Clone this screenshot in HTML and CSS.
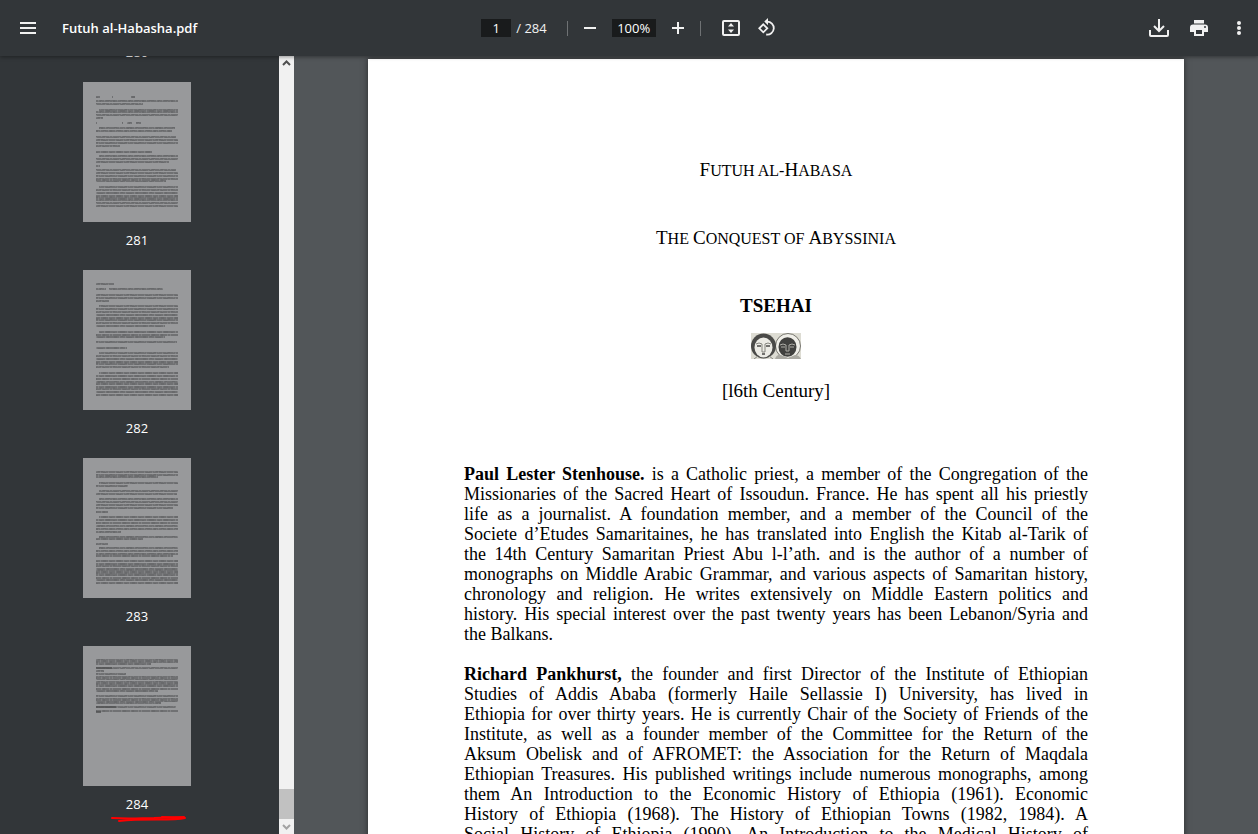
FILE: index.html
```html
<!DOCTYPE html>
<html lang="en">
<head>
    <meta charset="UTF-8">
    <meta name="viewport" content="width=device-width, initial-scale=1.0">
    <title>Futuh al-Habasha.pdf</title>
    <link rel="stylesheet" href="styles.css">
</head>
<body>
    <header class="toolbar">
        <div class="toolbar-start">
            <button class="icon-button" aria-label="Menu">
                <svg width="20" height="20" viewBox="0 0 20 20"><path d="M2 5h16M2 10h16M2 15h16" stroke="#f1f1f1" stroke-width="2"/></svg>
            </button>
            <h1 class="file-name">Futuh al-Habasha.pdf</h1>
        </div>

        <div class="toolbar-center">
            <div class="page-selector">
                <input class="field page-field" type="text" value="1" aria-label="Page number">
                <span>/ 284</span>
            </div>
            <span class="divider"></span>
            <div class="zoom-controls">
                <button class="icon-button" aria-label="Zoom out">
                    <svg width="20" height="20" viewBox="0 0 20 20"><path d="M4 10h12" stroke="#f1f1f1" stroke-width="2"/></svg>
                </button>
                <input class="field zoom-field" type="text" value="100%" aria-label="Zoom level">
                <button class="icon-button" aria-label="Zoom in">
                    <svg width="20" height="20" viewBox="0 0 20 20"><path d="M4 10h12M10 4v12" stroke="#f1f1f1" stroke-width="2"/></svg>
                </button>
            </div>
            <span class="divider"></span>
            <div class="view-controls">
                <button class="icon-button" aria-label="Fit to page">
                    <svg width="20" height="20" viewBox="0 0 20 20">
                        <rect x="2" y="3" width="16" height="14" rx="1" fill="none" stroke="#f1f1f1" stroke-width="2"/>
                        <path d="M10 5l3 3.500H7zM10 15l3-3.500H7z" fill="#f1f1f1"/>
                    </svg>
                </button>
                <button class="icon-button" aria-label="Rotate counterclockwise">
                    <svg width="20" height="20" viewBox="0 0 20 20" fill="none" stroke="#f1f1f1" stroke-width="1.800">
                        <path d="M6.300 6.300l4 4-4 4-4-4z"/>
                        <path d="M10 3.600a6.500 6.500 0 1 1-.800 12.900"/>
                        <path d="M11 0v7.200L7.300 3.600z" fill="#f1f1f1" stroke="none"/>
                    </svg>
                </button>
            </div>
        </div>

        <div class="toolbar-end">
            <button class="icon-button" aria-label="Download">
                <svg width="20" height="20" viewBox="0 0 20 20" fill="none" stroke="#f1f1f1" stroke-width="2">
                    <path d="M10 1v12M5 8l5 5 5-5M1 12v5q0 1 1 1h16q1 0 1-1v-5"/>
                </svg>
            </button>
            <button class="icon-button" aria-label="Print">
                <svg width="20" height="20" viewBox="0 0 20 20">
                    <path d="M5 2h10v3.500H5z" fill="#f1f1f1"/>
                    <path d="M4 6.500h12q3 0 3 3V14h-4v4H5v-4H1V9.500q0-3 3-3zM7 12v4h6v-4z" fill="#f1f1f1" fill-rule="evenodd"/>
                    <circle cx="16" cy="9" r="1" fill="#323639"/>
                </svg>
            </button>
            <button class="icon-button" aria-label="More actions">
                <svg width="20" height="20" viewBox="0 0 20 20" fill="#f1f1f1"><circle cx="10" cy="5" r="2"/><circle cx="10" cy="10" r="2"/><circle cx="10" cy="15" r="2"/></svg>
            </button>
        </div>
    </header>

    <div class="viewer">
        <nav class="sidebar" aria-label="Page thumbnails">
            <div class="thumbnails">
                <a class="thumbnail" href="#page-280"><span>280</span></a>
                <a class="thumbnail" href="#page-281">
                    <svg class="sheet" width="108" height="140" viewBox="0 0 108 140">
                        <defs>
                            <!-- uneven ink, shared by the small print of all the sheets -->
                            <pattern id="ink" width="29" height="11" patternUnits="userSpaceOnUse">
                                <rect width="29" height="11" fill="#636466"/>
                                <path d="M2 1h3M9 0h2M15 2h5M24 1h2M5 4h4M13 5h2M20 4h3M27 5h2M1 8h2M8 7h5M17 8h2M23 7h4M11 10h3M20 10h2" stroke="#505153"/>
                                <path d="M7 1h1M13 1h1M22 1h1M3 4h1M11 4h1M17 4h1M25 4h1M5 7h1M15 7h1M21 7h1M0 10h1M9 10h1M18 10h1M26 10h1" stroke="#7a7b7d" stroke-width="3"/>
                            </pattern>
                        </defs>
                        <path class="print" d="M13 15h4M29 15h1M48 15h4M13 19h82M13 22h47M16 28h79M13 30h82M13 33h82M13 36h7M13 41h1M39 41h1M44 41h5M53 41h5M16 46h76M13 49h76M13 55h80M13 58h82M13 61h82M13 64h24M13 70h56M16 74h79M13 77h82M13 80h73M13 84h4M13 88h80M13 91h82M13 94h82M13 97h82M13 99h70M16 105h79M13 108h82M13 111h82M13 114h82M13 116h82M13 118h82M13 121h82M13 124h82" stroke="url(#ink)"/>
                    </svg>
                    <span>281</span>
                </a>
                <a class="thumbnail" href="#page-282">
                    <svg class="sheet" width="108" height="140" viewBox="0 0 108 140">
                        <path class="print" d="M13 14h18M13 19h10M26 19h54M13 25h82M13 28h82M13 31h13M16 36h79M13 39h82M13 42h82M13 45h82M13 48h82M13 50h82M13 53h82M13 56h69M16 62h79M13 65h82M13 67h69M13 72h81M13 78h31M16 83h79M13 86h82M13 89h82M13 92h82M13 94h82M13 97h73M16 103h79M13 106h82M13 109h82M13 112h82M13 114h82M13 117h82M13 119h82M13 122h82M13 125h82" stroke="url(#ink)"/>
                    </svg>
                    <span>282</span>
                </a>
                <a class="thumbnail" href="#page-283">
                    <svg class="sheet" width="108" height="140" viewBox="0 0 108 140">
                        <path class="print" d="M13 14h82M13 17h82M13 19h62M16 25h79M13 28h32M16 33h79M13 36h81M16 41h79M13 44h82M13 47h82M13 50h77M13 54h12M16 59h79M13 62h82M13 65h82M13 68h82M13 71h82M13 74h25M16 79h79M13 81h47M13 86h12M16 90h79M13 93h82M13 96h82M13 98h77M13 103h82M13 106h82M13 108h82M13 111h82M13 113h82M13 115h82M13 117h82M13 120h82M13 122h82M13 125h82" stroke="url(#ink)"/>
                    </svg>
                    <span>283</span>
                </a>
                <a class="thumbnail" href="#page-284">
                    <svg class="sheet" width="108" height="140" viewBox="0 0 108 140">
                        <path class="print" d="M13 14h82M13 16h82M13 18h55M13 22h82M13 25h8M13 28h30M13 31h82M13 33h82M13 36h82M13 38h82M13 40h82M13 43h82M13 45h62M13 50h82M13 53h82M13 55h82M13 57h65M13 61h80M13 65h82" stroke="url(#ink)"/>
                        <path class="print" d="M13 22h16M13 61h20M13 66h5" stroke="#505153"/>
                    </svg>
                    <span>284</span>
                    <svg class="pen-mark" width="78" height="8" viewBox="0 0 78 8" fill="none" stroke="#f00" stroke-linecap="round" stroke-linejoin="round">
                        <path d="M2 3C20 4 32 3 44 3L74 2" stroke-width="2"/>
                        <path d="M52 2L75 3C62 6 36 3 9 6" stroke-width="2"/>
                    </svg>
                </a>
            </div>
            <div class="scrollbar" aria-hidden="true">
                <svg class="scroll-arrow" width="15" height="15" viewBox="0 0 15 15"><path d="M4 9l3.500-3.500L11 9" fill="none" stroke="#505050" stroke-width="2"/></svg>
                <span class="scroll-thumb"></span>
                <svg class="scroll-arrow" width="15" height="15" viewBox="0 0 15 15"><path d="M4 6l3.500 3.500L11 6" fill="none" stroke="#a3a3a3" stroke-width="2"/></svg>
            </div>
        </nav>

        <main class="document">
            <article class="page">
                <h2 class="title"><span class="cap">F</span>UTUH AL-<span class="cap">H</span>ABASA</h2>
                <h2 class="title"><span class="cap">T</span>HE <span class="cap">C</span>ONQUEST OF <span class="cap">A</span>BYSSINIA</h2>
                <h2 class="publisher">TSEHAI</h2>
                <svg class="emblem" width="50" height="26" viewBox="0 0 50 26">
                    <rect width="50" height="26" fill="#dddcd3"/>
                    <!-- dark face on the right -->
                    <circle cx="37" cy="13" r="12.500" fill="#efeee8" stroke="#77766f"/>
                    <path d="M24 26q2-5 6-4l7 3 7-3q4 0 6 4z" fill="#aaa9a2"/>
                    <ellipse cx="36.500" cy="14" rx="9" ry="9.800" fill="#41413f"/>
                    <path d="M29 12q3-2 6 0v6h3v-6q3-2 6 0M30 14h4M39 14h4M34 21h5" fill="none" stroke="#aeada6"/>
                    <!-- light face on the left -->
                    <circle cx="12.500" cy="13" r="12.500" fill="#4a4a48"/>
                    <ellipse cx="12.500" cy="14.500" rx="9" ry="10" fill="#ecebe5"/>
                    <path d="M5 11q3-2 6 0v8h3v-8q3-2 6 0M3 26l4-3M22 26l-4-3" fill="none" stroke="#85857f"/>
                    <path d="M6 13h4M15 13h4M11 21h3" stroke="#4a4a48" stroke-width="1.500"/>
                </svg>
                <p class="century">[l6th Century]</p>

                <div class="bio">
                    <p class="justified"><strong>Paul Lester Stenhouse.</strong> is a Catholic priest, a member of the Congregation of the<br>
                    Missionaries of the Sacred Heart of Issoudun. France. He has spent all his priestly<br>
                    life as a journalist. A foundation member, and a member of the Council of the<br>
                    Societe d’Etudes Samaritaines, he has translated into English the Kitab al-Tarik of<br>
                    the 14th Century Samaritan Priest Abu l-l’ath. and is the author of a number of<br>
                    monographs on Middle Arabic Grammar, and various aspects of Samaritan history,<br>
                    chronology and religion. He writes extensively on Middle Eastern politics and<br>
                    history. His special interest over the past twenty years has been Lebanon/Syria and</p>
                    <p>the Balkans.</p>
                </div>

                <div class="bio">
                    <p class="justified"><strong>Richard Pankhurst,</strong> the founder and first Director of the Institute of Ethiopian<br>
                    Studies of Addis Ababa (formerly Haile Sellassie I) University, has lived in<br>
                    Ethiopia for over thirty years. He is currently Chair of the Society of Friends of the<br>
                    Institute, as well as a founder member of the Committee for the Return of the<br>
                    Aksum Obelisk and of AFROMET: the Association for the Return of Maqdala<br>
                    Ethiopian Treasures. His published writings include numerous monographs, among<br>
                    them An Introduction to the Economic History of Ethiopia (1961). Economic<br>
                    History of Ethiopia (1968). The History of Ethiopian Towns (1982, 1984). A<br>
                    Social History of Ethiopia (1990). An Introduction to the Medical History of</p>
                </div>
            </article>
        </main>
    </div>
</body>
</html>
```
FILE: styles.css
```css
* {
    box-sizing: border-box;
}
body {
    margin: 0;
    height: 100vh;
    display: flex;
    flex-direction: column;
    overflow: hidden;
    background-color: #525659;
    color: #f1f1f1;
    font-family: "Open Sans", "Noto Sans", sans-serif;
    font-size: 13px;
}
h1, h2, p {
    margin: 0;
}
svg {
    display: block;
}

/* Toolbar */
.toolbar {
    display: grid;
    grid-template-columns: 1fr auto 1fr;
    align-items: center;
    flex: none;
    height: 56px;
    background-color: #323639;
    box-shadow: 0 1px 4px rgba(0, 0, 0, 0.4);
    position: relative;
    z-index: 1;
}
.toolbar-start, .toolbar-center, .toolbar-end,
.page-selector, .zoom-controls, .view-controls {
    display: flex;
    align-items: center;
}
.toolbar-start {
    gap: 24px;
    padding-left: 18px;
}
.toolbar-center {
    gap: 12px;
}
.toolbar-end {
    justify-content: flex-end;
    gap: 20px;
    padding-right: 9px;
}
.file-name {
    color: #fff;
    font-size: 13px;
    font-weight: 600;
    line-height: 20px;
}
.icon-button {
    padding: 0;
    border: 0;
    background: none;
    cursor: pointer;
}
.page-selector {
    gap: 5px;
    padding-right: 8px;
}
.zoom-controls {
    gap: 12px;
}
.view-controls {
    gap: 16px;
    padding-left: 8px;
}
.divider {
    width: 1px;
    height: 15px;
    background-color: #6f7274;
}
.field {
    height: 18px;
    padding: 0;
    border: 0;
    background-color: #191b1c;
    color: #fff;
    font: inherit;
    text-align: center;
}
.page-field {
    width: 30px;
}
.zoom-field {
    width: 44px;
}

/* Sidebar */
.viewer {
    display: flex;
    flex: 1;
    min-height: 0;
}
.sidebar {
    display: flex;
    flex: none;
    width: 294px;
    background-color: #323639;
}
.thumbnails {
    display: flex;
    flex: 1;
    flex-direction: column;
    justify-content: flex-end;
    align-items: center;
    gap: 22px;
    padding: 0 5px 22px 0;
    overflow: hidden;
}
.thumbnail {
    display: flex;
    flex: none;
    flex-direction: column;
    align-items: center;
    gap: 10px;
    position: relative;
    color: #fff;
    line-height: 16px;
    text-decoration: none;
}
.sheet {
    background-color: #98999b;
}
.print {
    fill: none;
    stroke-width: 1.5;
}
.pen-mark {
    position: absolute;
    top: 169px;
    left: 27px;
}
.scrollbar {
    display: flex;
    flex-direction: column;
    flex: none;
    width: 15px;
    background-color: #f1f1f1;
}
.scroll-arrow {
    flex: none;
}
.scroll-thumb {
    height: 30px;
    margin-top: auto;
    background-color: #c1c1c1;
}

/* Document */
.document {
    display: flex;
    flex: 1;
    justify-content: center;
    align-items: flex-start;
    padding-top: 3px;
    overflow: hidden;
}
.page {
    display: flex;
    flex-direction: column;
    align-items: center;
    width: 816px;
    padding: 101px 96px;
    background-color: #fff;
    box-shadow: 0 0 6px rgba(0, 0, 0, 0.5);
    color: #000;
    font-family: "Liberation Serif", "Times New Roman", serif;
    font-size: 18px;
    line-height: 20px;
}
.cap, .publisher, .century {
    font-size: 19px;
}
.title {
    margin-bottom: 47px;
    font-size: 16px;
    font-weight: normal;
}
.publisher {
    margin-bottom: 17px;
}
.century {
    margin: 22px 0 63px;
}
.bio {
    width: 100%;
    margin-bottom: 20px;
}
.justified {
    text-align: justify;
    text-align-last: justify;
}
```
